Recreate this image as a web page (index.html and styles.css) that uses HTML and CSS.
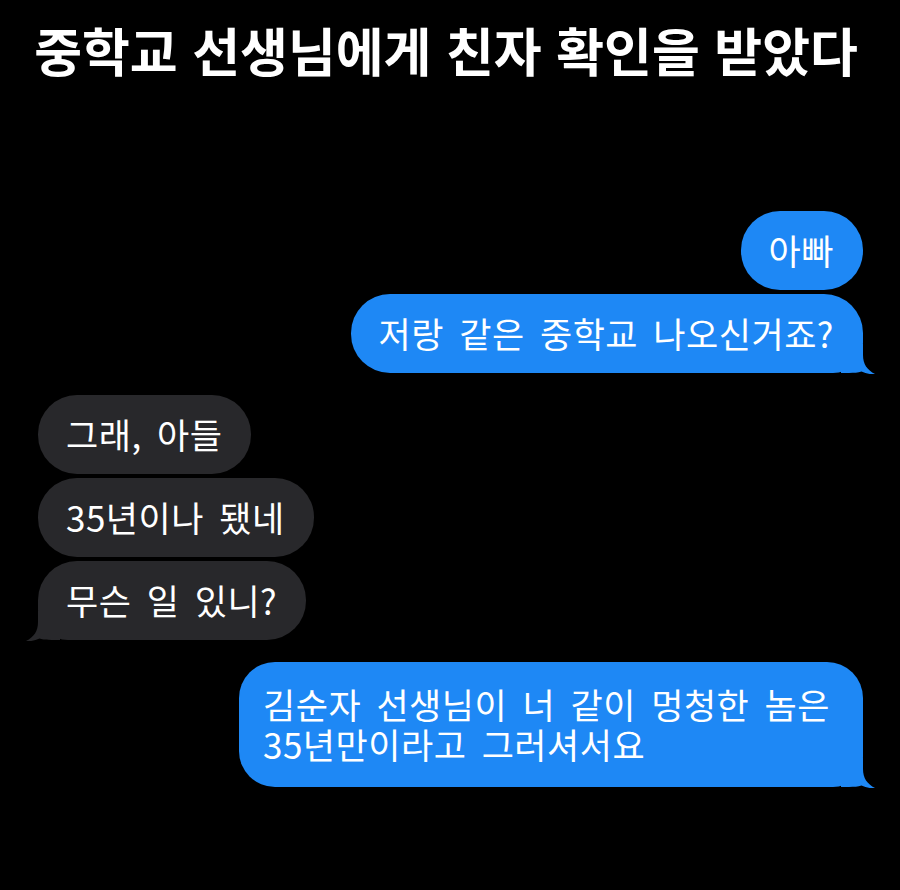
FILE: index.html
```html
<!DOCTYPE html>
<html lang="ko">
<head>
<meta charset="utf-8">
<link rel="stylesheet" href="styles.css">
</head>
<body>
<h1 class="title">중학교 선생님에게 친자 확인을 받았다</h1>
<div class="chat">
  <div class="group sent">
    <div class="bubble">아빠</div>
    <div class="bubble has-tail">저랑 같은 중학교 나오신거죠?<svg class="tail" width="34" height="30" viewBox="0 0 34 30"><path d="M0 0H22V11C22 20 26 26 34 30C29 30.6 24.5 29.4 20.5 27.6C17 28.9 13 29 8 29H0Z"/></svg></div>
  </div>
  <div class="group recv">
    <div class="bubble">그래, 아들</div>
    <div class="bubble">35년이나 됐네</div>
    <div class="bubble has-tail">무슨 일 있니?<svg class="tail" width="34" height="30" viewBox="0 0 34 30"><path d="M0 0H22V11C22 20 26 26 34 30C29 30.6 24.5 29.4 20.5 27.6C17 28.9 13 29 8 29H0Z"/></svg></div>
  </div>
  <div class="group sent">
    <div class="bubble multi has-tail">김순자 선생님이 너 같이 멍청한 놈은<br>35년만이라고 그러셔서요<svg class="tail" width="34" height="30" viewBox="0 0 34 30"><path d="M0 0H22V11C22 20 26 26 34 30C29 30.6 24.5 29.4 20.5 27.6C17 28.9 13 29 8 29H0Z"/></svg></div>
  </div>
</div>
</body>
</html>
```
FILE: styles.css
```css
html, body {
  margin: 0;
  padding: 0;
  background: #000;
}
body {
  width: 900px;
  height: 890px;
  overflow: hidden;
  font-family: "Noto Sans CJK KR", "Noto Sans", sans-serif;
  color: #fff;
}
.title {
  margin: 0;
  padding: 20px 8px 0 0;
  font-size: 52px;
  line-height: 60px;
  font-weight: 700;
  text-align: center;
  letter-spacing: 0;
  white-space: nowrap;
}
.chat {
  margin-top: 131px;
  padding: 0 37px 0 38px;
  display: flex;
  flex-direction: column;
  gap: 22px;
}
.group {
  display: flex;
  flex-direction: column;
  gap: 4px;
}
.sent { align-items: flex-end; }
.recv { align-items: flex-start; }
.bubble {
  position: relative;
  font-size: 35px;
  line-height: 40px;
  letter-spacing: 0.5px;
  word-spacing: 5px;
  padding: 19px 29px 20px 28px;
  border-radius: 39px;
  white-space: nowrap;
}
.sent .bubble { background: #1e88f5; }
.recv .bubble { background: #28282b; }
.bubble.multi {
  padding: 22px 33px 23px 24px;
  border-radius: 36px;
}
.sent .bubble.has-tail { border-bottom-right-radius: 30px; }
.recv .bubble.has-tail { border-bottom-left-radius: 30px; }
.tail {
  position: absolute;
  bottom: -1px;
  display: block;
}
.sent .tail {
  right: -12px;
  fill: #1e88f5;
}
.recv .tail {
  left: -12px;
  fill: #28282b;
  transform: scaleX(-1);
}
```
